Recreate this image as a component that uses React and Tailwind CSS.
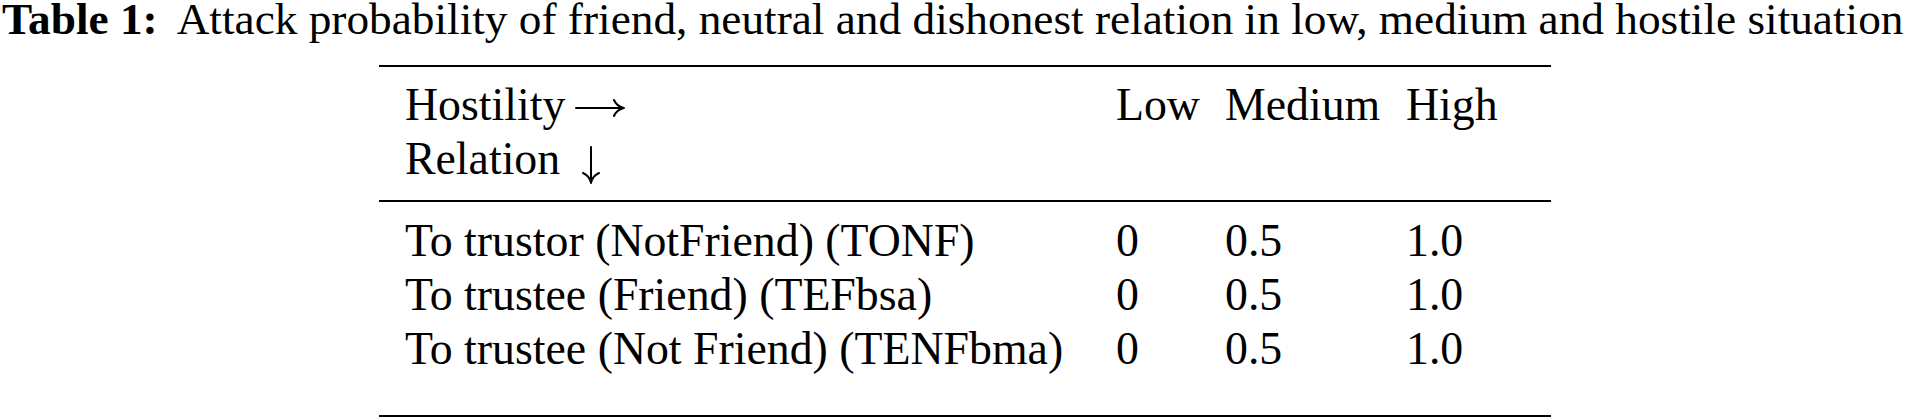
function RightArrow() {
  return (
    <svg width="50" height="20" viewBox="0 0 50 20" className="inline-block align-[2px] ml-[10px]" fill="none" stroke="black" strokeWidth="2" strokeLinecap="round">
      <path d="M1 10 H48" />
      <path d="M39 2 Q41.5 8 48.5 10 Q41.5 12 39 18" />
    </svg>
  );
}

function DownArrow() {
  return (
    <svg width="18" height="38" viewBox="0 0 18 38" className="inline-block align-[-10px] ml-[22px]" fill="none" stroke="black" strokeWidth="2" strokeLinecap="round">
      <path d="M9 1 V36" />
      <path d="M1 27 Q7 29.5 9 36.5 Q11 29.5 17 27" />
    </svg>
  );
}

export default function App() {
  const rows = [
    ["To trustor (NotFriend) (TONF)", "0", "0.5", "1.0"],
    ["To trustee (Friend) (TEFbsa)", "0", "0.5", "1.0"],
    ["To trustee (Not Friend) (TENFbma)", "0", "0.5", "1.0"],
  ];
  return (
    <div className="w-[1931px] h-[418px] bg-white text-black overflow-hidden font-['Liberation_Serif','Times_New_Roman',serif]">
      <div className="text-[45.3px] leading-[37px] pt-[1px] pl-[2px] whitespace-nowrap">
        <span className="font-bold">Table 1:</span>
        <span className="ml-[19px]">Attack probability of friend, neutral and dishonest relation in low, medium and hostile situation</span>
      </div>
      <div className="ml-[379px] w-[1172px] mt-[27px] text-[45.8px]">
        <div className="h-[2px] bg-black" />
        <div className="grid grid-cols-[711px_109px_181px_1fr] pl-[26px] pt-[11px] pb-[14px] leading-[54px]">
          <div>
            <div className="whitespace-nowrap">Hostility<RightArrow /></div>
            <div className="whitespace-nowrap">Relation<DownArrow /></div>
          </div>
          <div>Low</div>
          <div>Medium</div>
          <div>High</div>
        </div>
        <div className="h-[2px] bg-black" />
        <div className="pl-[26px] pt-[12px] pb-[39px] leading-[54px]">
          {rows.map((r, i) => (
            <div key={i} className="grid grid-cols-[711px_109px_181px_1fr]">
              <div className="whitespace-nowrap">{r[0]}</div>
              <div>{r[1]}</div>
              <div>{r[2]}</div>
              <div>{r[3]}</div>
            </div>
          ))}
        </div>
        <div className="h-[2px] bg-black" />
      </div>
    </div>
  );
}
